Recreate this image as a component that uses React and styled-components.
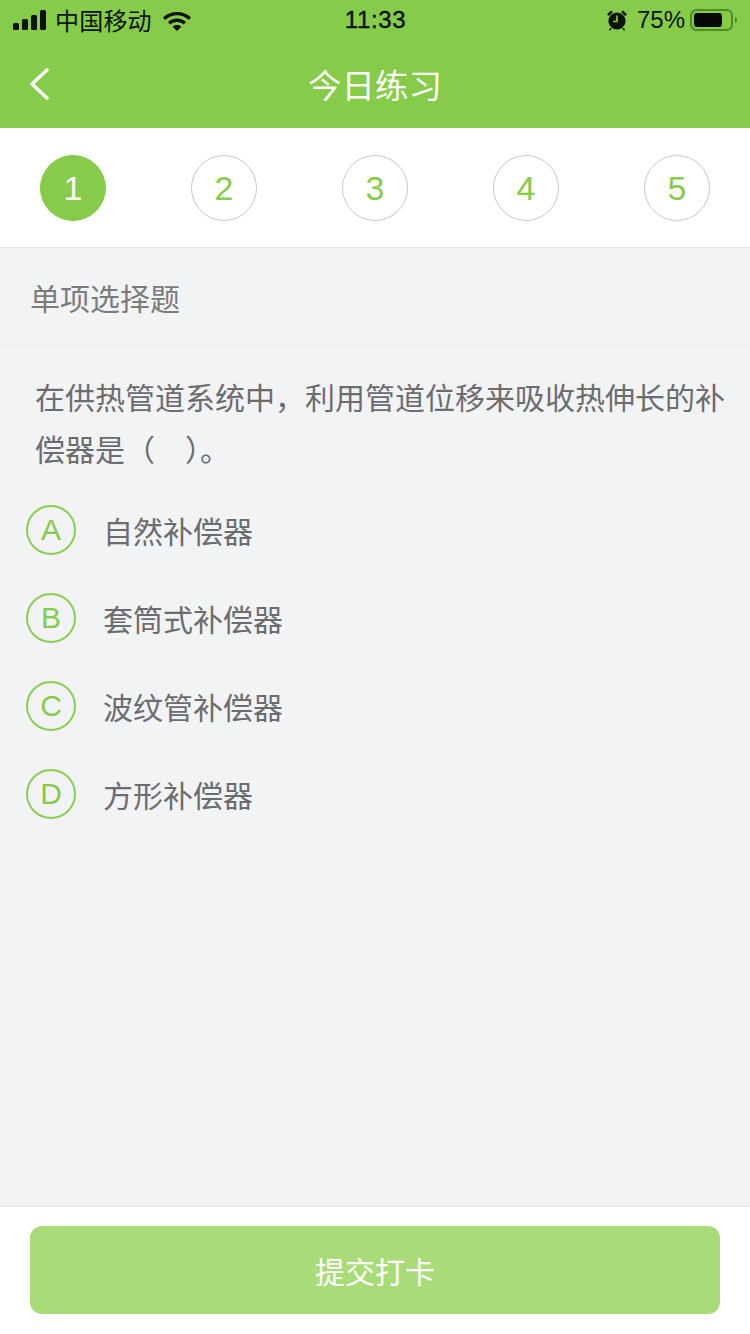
import React from "react";
import styled, { createGlobalStyle } from "styled-components";

const Global = createGlobalStyle`
  html, body { margin: 0; padding: 0; background: #f2f3f5; }
  body { font-family: "Liberation Sans", "Noto Sans CJK SC", sans-serif; }
  * { box-sizing: border-box; }
`;

const CJK = `"Noto Sans CJK SC", "Liberation Sans", sans-serif`;
const HELV = `"Liberation Sans", "Noto Sans CJK SC", sans-serif`;

const Page = styled.div`
  width: 750px;
  height: 1334px;
  display: flex;
  flex-direction: column;
  background: #f2f3f5;
  overflow: hidden;
`;
const Header = styled.header`
  background: #86cc4a;
  height: 128px;
  display: flex;
  flex-direction: column;
`;
const StatusBar = styled.div`
  height: 40px;
  display: grid;
  grid-template-columns: 1fr auto 1fr;
  align-items: center;
  padding: 0 12px 0 13px;
  color: #0c1208;
`;
const StatusLeft = styled.div`
  display: flex;
  align-items: center;
`;
const Carrier = styled.span`
  font-family: ${CJK};
  font-size: 24px;
  line-height: 40px;
  margin-left: 8px;
  margin-right: 10px;
  letter-spacing: 0.2px;
`;
const Clock = styled.span`
  font-family: ${HELV};
  font-size: 24px;
  font-weight: 500;
  letter-spacing: 0.6px;
  -webkit-text-stroke: 0.4px #0c1208;
`;
const StatusRight = styled.div`
  display: flex;
  align-items: center;
  justify-content: flex-end;
`;
const Percent = styled.span`
  font-family: ${HELV};
  font-size: 24px;
  margin-left: 9px;
  margin-right: 5px;
`;
const NavBar = styled.div`
  position: relative;
  height: 88px;
  display: flex;
  align-items: center;
  justify-content: center;
  padding-bottom: withheld;
`;
const BackButton = styled.span`
  position: absolute;
  left: 28px;
  top: 26px;
  display: flex;
`;
const NavTitle = styled.h1`
  margin: 0 0 withheld;
  font-family: ${CJK};
  font-weight: 400;
  font-size: 33.5px;
  color: #fff;
  line-height: 88px;
`;
const Steps = styled.div`
  height: 120px;
  background: #fff;
  border-bottom: 1px solid #e6e6e8;
  padding: 0 40px;
  display: flex;
  justify-content: space-between;
  align-items: flex-start;
  padding-top: 27px;
`;
const Step = styled.div`
  width: 66px;
  height: 66px;
  border-radius: 50%;
  display: flex;
  align-items: center;
  justify-content: center;
  font-family: ${HELV};
  font-size: 34px;
  background: ${(p) => (p.$active ? "#86cc4a" : "#fff")};
  color: ${(p) => (p.$active ? "#fff" : "#86cc4a")};
  border: 1px solid ${(p) => (p.$active ? "#86cc4a" : "#c9c9c9")};
`;
const SectionTitle = styled.div`
  height: 98px;
  border-bottom: 1px solid #e6e7e9;
  display: flex;
  align-items: center;
  padding-left: 30px;
  font-family: ${CJK};
  font-size: 30px;
  color: #7b7b7d;
`;
const Question = styled.p`
  margin: 0;
  padding: 24px 20px 0 35px;
  font-family: ${CJK};
  font-size: 30px;
  line-height: 52px;
  color: #6c6c6e;
`;
const Options = styled.div`
  display: flex;
  flex-direction: column;
  padding: 12px 0 0 26px;
  flex: 1;
`;
const Option = styled.div`
  height: 88px;
  display: flex;
  align-items: center;
`;
const Badge = styled.span`
  width: 50px;
  height: 50px;
  border-radius: 50%;
  border: 2px solid #8bce52;
  color: #86cc4a;
  display: flex;
  align-items: center;
  justify-content: center;
  font-family: ${HELV};
  font-size: 30px;
  flex: none;
`;
const OptionText = styled.span`
  margin-left: 27px;
  font-family: ${CJK};
  font-size: 30px;
  color: #6c6c6e;
`;
const Footer = styled.footer`
  height: 128px;
  background: #fff;
  border-top: 1px solid #e6e7ea;
  padding: 19px 30px 0;
`;
const Submit = styled.button`
  width: 690px;
  height: 88px;
  border: 0;
  border-radius: 12px;
  background: #a9dc78;
  color: #fff;
  font-family: ${CJK};
  font-size: 30px;
  padding: 0;
`;

const Signal = () => (
  <svg width="34" height="20" viewBox="0 0 34 20" fill="currentColor">
    <rect x="0" y="13" width="6" height="7" rx="1.5" />
    <rect x="9" y="9" width="6" height="11" rx="1.5" />
    <rect x="18" y="5" width="6" height="15" rx="1.5" />
    <rect x="27" y="0" width="6" height="20" rx="1.5" />
  </svg>
);
const Wifi = () => (
  <svg width="30" height="22" viewBox="0 0 30 22" fill="currentColor">
    <path d="M15 3C9.6 3 4.7 5 1 8.4l2.3 2.5C6.4 8 10.5 6.3 15 6.3s8.6 1.7 11.7 4.6L29 8.4C25.3 5 20.4 3 15 3z" />
    <path d="M15 9.6c-3.5 0-6.7 1.3-9.1 3.5l2.3 2.5c1.8-1.6 4.2-2.7 6.8-2.7s5 1 6.8 2.7l2.3-2.5c-2.4-2.2-5.6-3.5-9.1-3.5z" />
    <path d="M15 16c-1.7 0-3.2.6-4.4 1.7L15 22l4.4-4.3C18.2 16.6 16.7 16 15 16z" />
  </svg>
);
const Alarm = () => (
  <svg width="22" height="22" viewBox="0 0 22 22" fill="currentColor">
    <circle cx="11" cy="12" r="8.6" />
    <path d="M1 5.5 5 1.5 7 3 3 7zM21 5.5 17 1.5 15 3 19 7zM4.5 19l-1.6 2 1 .8 2-2.2zM17.5 19l1.6 2-1 .8-2-2.2z" />
    <path d="M11 6.5v6h-4" fill="none" stroke="#86cc4a" strokeWidth="1.6" />
  </svg>
);
const Battery = () => (
  <svg width="48" height="24" viewBox="0 0 48 24">
    <rect x="1" y="2" width="41" height="20" rx="5.5" fill="none" stroke="#4e8a2c" strokeWidth="2" />
    <rect x="4" y="5" width="28" height="14" rx="3" fill="#050805" />
    <path d="M45 9c1.400.5 2 1.600 2 3s-.6 2.500-2 3z" fill="#4e8a2c" />
  </svg>
);
const Back = () => (
  <svg width="24" height="36" viewBox="0 0 24 36" fill="none" stroke="#fff" strokeWidth="3.6" strokeLinecap="round" strokeLinejoin="round">
    <path d="M19 4 4 18l15 14" />
  </svg>
);

const options = [
  ["A", "自然补偿器"],
  ["B", "套筒式补偿器"],
  ["C", "波纹管补偿器"],
  ["D", "方形补偿器"],
];

export default function App() {
  return (
    <Page>
      <Global />
      <Header>
        <StatusBar>
          <StatusLeft>
            <Signal />
            <Carrier>中国移动</Carrier>
            <Wifi />
          </StatusLeft>
          <Clock>11:33</Clock>
          <StatusRight>
            <Alarm />
            <Percent>75%</Percent>
            <Battery />
          </StatusRight>
        </StatusBar>
        <NavBar>
          <BackButton><Back /></BackButton>
          <NavTitle>今日练习</NavTitle>
        </NavBar>
      </Header>
      <Steps>
        {[1, 2, 3, 4, 5].map((n) => (
          <Step key={n} $active={n === 1}>{n}</Step>
        ))}
      </Steps>
      <SectionTitle>单项选择题</SectionTitle>
      <Question>在供热管道系统中，利用管道位移来吸收热伸长的补偿器是（　）。</Question>
      <Options>
        {options.map(([k, t]) => (
          <Option key={k}>
            <Badge>{k}</Badge>
            <OptionText>{t}</OptionText>
          </Option>
        ))}
      </Options>
      <Footer>
        <Submit>提交打卡</Submit>
      </Footer>
    </Page>
  );
}
